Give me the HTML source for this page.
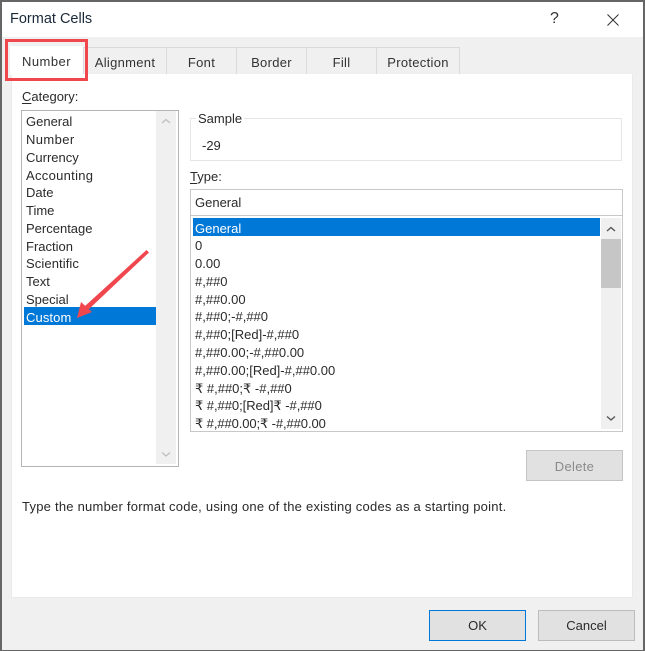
<!DOCTYPE html>
<html><head><meta charset="utf-8">
<style>
html,body{margin:0;padding:0;background:#f0f0f0}
#p{position:relative;width:645px;height:651px;overflow:hidden;background:#f0f0f0;font-family:"Liberation Sans",sans-serif;font-size:13px;color:#2a2a2a}
#p div{position:absolute;box-sizing:border-box}
.t{white-space:nowrap;line-height:18px;height:18px}
.tab{top:47px;height:27px;background:#f0f0f0;border:1px solid #dadada;border-bottom:none;text-align:center;line-height:30px;color:#333;letter-spacing:.3px}
u{text-decoration:underline;text-underline-offset:2px}
</style></head><body>
<div id="p">
<div style="left:0;top:0;width:645px;height:37px;background:#fff"></div>
<div class="t" style="left:10px;top:9px;font-size:14.5px;line-height:20px;height:20px;color:#1a2a3a">Format Cells</div>
<div class="t" style="left:550px;top:10px;font-size:16px;color:#333">?</div>
<svg style="position:absolute;left:607px;top:14px" width="12" height="12"><path d="M0.5 0.5L11.5 11.5M11.5 0.5L0.5 11.5" stroke="#333" stroke-width="1" fill="none"/></svg>

<div style="left:11px;top:74px;width:622px;height:524px;background:#fff;border:1px solid #eaeaea;border-top:none"></div>

<div class="tab" style="left:83px;width:84px">Alignment</div>
<div class="tab" style="left:166px;width:71px">Font</div>
<div class="tab" style="left:236px;width:71px">Border</div>
<div class="tab" style="left:306px;width:71px">Fill</div>
<div class="tab" style="left:376px;width:84px">Protection</div>
<div class="tab" style="left:10px;width:73px;height:29px;top:46px;background:#fff;border:none;line-height:32px;letter-spacing:.45px">Number</div>
<div style="left:5px;top:39px;width:83px;height:42px;border:3px solid #f0474f"></div>

<div class="t" style="left:22px;top:88px"><u>C</u>ategory:</div>
<div style="left:21px;top:110px;width:158px;height:357px;background:#fff;border:1px solid #b4b4b4"></div>
<div style="left:156px;top:111px;width:20px;height:353px;background:#f0f0f0"></div>
<svg style="position:absolute;left:161px;top:118px" width="10" height="7"><path d="M1 5L5 1.5L9 5" stroke="#c0c0c0" stroke-width="1.4" fill="none"/></svg>
<svg style="position:absolute;left:161px;top:451px" width="10" height="7"><path d="M1 1.5L5 5L9 1.5" stroke="#c0c0c0" stroke-width="1.4" fill="none"/></svg>
<div style="left:24px;top:307px;width:132px;height:18px;background:#0078d7"></div>
<div class="t" style="left:26px;top:113px">General</div>
<div class="t" style="left:26px;top:131px;letter-spacing:.4px">Number</div>
<div class="t" style="left:26px;top:149px">Currency</div>
<div class="t" style="left:26px;top:167px;letter-spacing:.3px">Accounting</div>
<div class="t" style="left:26px;top:184px">Date</div>
<div class="t" style="left:26px;top:202px">Time</div>
<div class="t" style="left:26px;top:220px">Percentage</div>
<div class="t" style="left:26px;top:238px">Fraction</div>
<div class="t" style="left:26px;top:255px;letter-spacing:.1px">Scientific</div>
<div class="t" style="left:26px;top:273px">Text</div>
<div class="t" style="left:26px;top:291px">Special</div>
<div class="t" style="left:26px;top:309px;color:#fff;letter-spacing:.1px">Custom</div>

<div style="left:190px;top:118px;width:432px;height:43px;border:1px solid #e6e6e6"></div>
<div class="t" style="left:196px;top:111px;background:#fff;padding:0 2px;height:16px;line-height:16px">Sample</div>
<div class="t" style="left:202px;top:137px">-29</div>

<div class="t" style="left:190px;top:168px"><u>T</u>ype:</div>
<div style="left:190px;top:189px;width:433px;height:27px;background:#fff;border:1px solid #c8c8c8"></div>
<div class="t" style="left:195px;top:194px">General</div>
<div style="left:190px;top:215px;width:433px;height:217px;background:#fff;border:1px solid #c8c8c8"></div>
<div style="left:193px;top:218px;width:407px;height:18px;background:#0078d7"></div>
<div style="left:601px;top:218px;width:20px;height:211px;background:#f0f0f0"></div>
<div style="left:601px;top:239px;width:20px;height:49px;background:#c6c6c6"></div>
<svg style="position:absolute;left:606px;top:226px" width="10" height="7"><path d="M1 5L5 1.5L9 5" stroke="#555" stroke-width="1.4" fill="none"/></svg>
<svg style="position:absolute;left:606px;top:415px" width="10" height="7"><path d="M1 1.5L5 5L9 1.5" stroke="#555" stroke-width="1.4" fill="none"/></svg>
<div class="t" style="left:195px;top:220px;color:#fff">General</div>
<div class="t" style="left:195px;top:237px">0</div>
<div class="t" style="left:195px;top:255px">0.00</div>
<div class="t" style="left:195px;top:273px">#,##0</div>
<div class="t" style="left:195px;top:291px">#,##0.00</div>
<div class="t" style="left:195px;top:308px">#,##0;-#,##0</div>
<div class="t" style="left:195px;top:326px">#,##0;[Red]-#,##0</div>
<div class="t" style="left:195px;top:344px">#,##0.00;-#,##0.00</div>
<div class="t" style="left:195px;top:362px">#,##0.00;[Red]-#,##0.00</div>
<div class="t" style="left:195px;top:380px">₹ #,##0;₹ -#,##0</div>
<div class="t" style="left:195px;top:397px;letter-spacing:-.05px">₹ #,##0;[Red]₹ -#,##0</div>
<div class="t" style="left:195px;top:415px;letter-spacing:-.1px">₹ #,##0.00;₹ -#,##0.00</div>

<div style="left:526px;top:450px;width:97px;height:31px;background:#e1e1e1;border:1px solid #c4c4c4;text-align:center;line-height:31px;color:#8a8a8a;letter-spacing:.3px">Delete</div>
<div class="t" style="left:22px;top:498px;letter-spacing:.235px">Type the number format code, using one of the existing codes as a starting point.</div>

<div style="left:429px;top:610px;width:97px;height:31px;background:#e1e1e1;border:1px solid #0078d7;text-align:center;line-height:30px">OK</div>
<div style="left:538px;top:610px;width:97px;height:31px;background:#e1e1e1;border:1px solid #bcbcbc;text-align:center;line-height:30px">Cancel</div>

<svg style="position:absolute;left:0;top:0" width="645" height="651">
<path d="M146.5 250L149 252.5L88 310L85 306Z" fill="#f0474f"/>
<path d="M77 318L81 302L92 312Z" fill="#f0474f"/>
</svg>

<div style="left:0;top:0;width:645px;height:2px;background:#666"></div>
<div style="left:0;top:0;width:2px;height:651px;background:#666"></div>
<div style="left:643px;top:0;width:2px;height:651px;background:#666"></div>
<div style="left:0;top:650px;width:645px;height:1px;background:#666"></div>
</div>
</body></html>
